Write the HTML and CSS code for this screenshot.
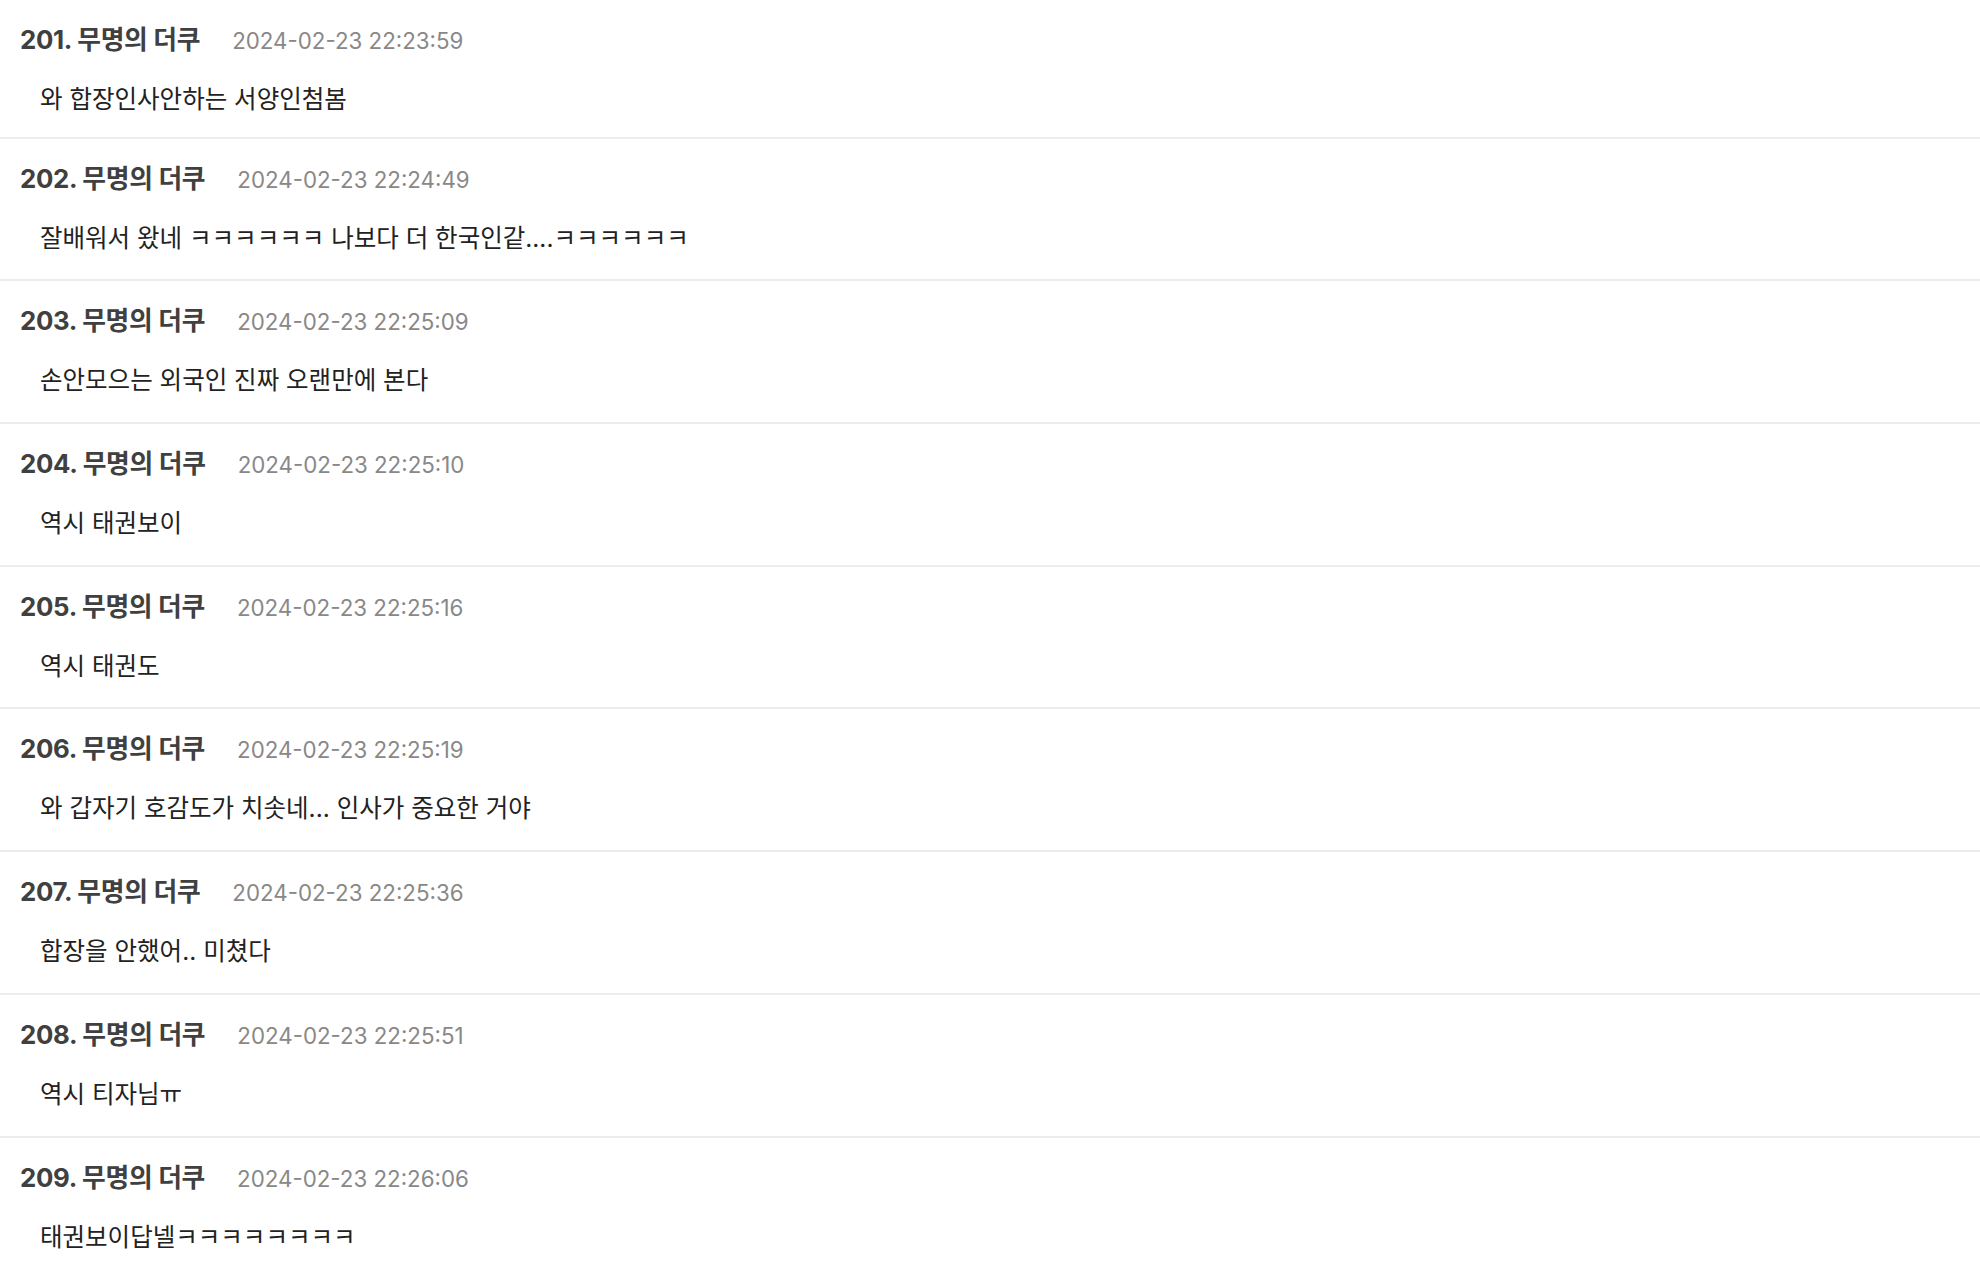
FILE: index.html
```html
<!DOCTYPE html>
<html lang="ko">
<head>
<meta charset="utf-8">
<title>댓글</title>
<link rel="stylesheet" href="styles.css">
</head>
<body>
<ul class="comments">
  <li class="comment">
    <div class="meta"><span class="author">201. 무명의 더쿠</span><span class="date">2024-02-23 22:23:59</span></div>
    <p class="text">와 합장인사안하는 서양인첨봄</p>
  </li>
  <li class="comment">
    <div class="meta"><span class="author">202. 무명의 더쿠</span><span class="date">2024-02-23 22:24:49</span></div>
    <p class="text">잘배워서 왔네 ㅋㅋㅋㅋㅋㅋ 나보다 더 한국인같....ㅋㅋㅋㅋㅋㅋ</p>
  </li>
  <li class="comment">
    <div class="meta"><span class="author">203. 무명의 더쿠</span><span class="date">2024-02-23 22:25:09</span></div>
    <p class="text">손안모으는 외국인 진짜 오랜만에 본다</p>
  </li>
  <li class="comment">
    <div class="meta"><span class="author">204. 무명의 더쿠</span><span class="date">2024-02-23 22:25:10</span></div>
    <p class="text">역시 태권보이</p>
  </li>
  <li class="comment">
    <div class="meta"><span class="author">205. 무명의 더쿠</span><span class="date">2024-02-23 22:25:16</span></div>
    <p class="text">역시 태권도</p>
  </li>
  <li class="comment">
    <div class="meta"><span class="author">206. 무명의 더쿠</span><span class="date">2024-02-23 22:25:19</span></div>
    <p class="text">와 갑자기 호감도가 치솟네... 인사가 중요한 거야</p>
  </li>
  <li class="comment">
    <div class="meta"><span class="author">207. 무명의 더쿠</span><span class="date">2024-02-23 22:25:36</span></div>
    <p class="text">합장을 안했어.. 미쳤다</p>
  </li>
  <li class="comment">
    <div class="meta"><span class="author">208. 무명의 더쿠</span><span class="date">2024-02-23 22:25:51</span></div>
    <p class="text">역시 티자님ㅠ</p>
  </li>
  <li class="comment">
    <div class="meta"><span class="author">209. 무명의 더쿠</span><span class="date">2024-02-23 22:26:06</span></div>
    <p class="text">태권보이답넬ㅋㅋㅋㅋㅋㅋㅋㅋ</p>
  </li>
</ul>
</body>
</html>
```
FILE: styles.css
```css
html, body {
  margin: 0;
  padding: 0;
  background: #ffffff;
}
body {
  font-family: Inter, "Noto Sans CJK KR", sans-serif;
  color: #222222;
}
.comments {
  list-style: none;
  margin: 0;
  padding: 0;
}
.comment {
  padding: 24px 0 25.7px 20px;
  border-bottom: 2px solid #ececec;
}
.comment:first-child {
  padding-bottom: 21.7px;
}
.meta {
  display: flex;
  align-items: baseline;
  gap: 32px;
  height: 32px;
  line-height: 32px;
}
.author {
  font-size: 25.8px;
  font-weight: 700;
  color: #404040;
  letter-spacing: -0.3px;
}
.date {
  font-size: 22.3px;
  color: #888888;
}
.text {
  margin: 27px 0 0 20px;
  font-size: 24.5px;
  line-height: 32px;
  color: #222222;
}
```
